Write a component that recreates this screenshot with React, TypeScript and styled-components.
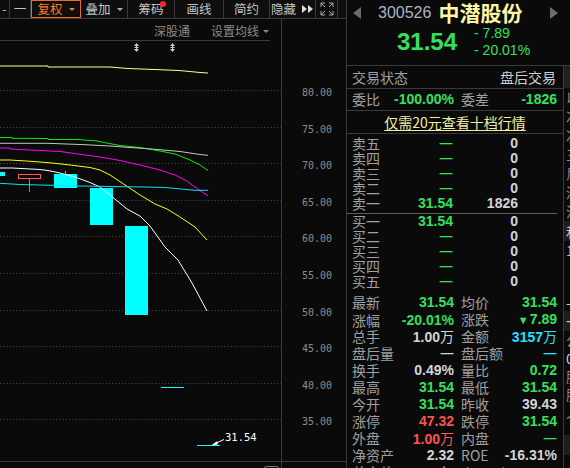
import React from 'react'
import styled, { createGlobalStyle } from 'styled-components'

const GREEN = '#35e05e'
const RED = '#ff5252'
const CYAN = '#22e2ff'
const WHITE = '#d4d4d4'
const LABEL = '#a0a0a0'
const LINE = '#3a3a3a'

const GlobalStyle = createGlobalStyle`
  html, body {
    margin: 0;
    padding: 0;
    background: #0a0a0a;
  }
  body {
    width: 570px;
    height: 468px;
    overflow: hidden;
    font-family: "Noto Sans CJK SC", sans-serif;
  }
`

const Screen = styled.div`
  display: flex;
  width: 570px;
  height: 468px;
  background: #0a0a0a;
  overflow: hidden;
`

/* ---------- left: toolbar + chart ---------- */

const LeftPane = styled.div`
  display: flex;
  flex-direction: column;
  width: 346px;
`
const Toolbar = styled.div`
  display: flex;
  height: 18px;
  border-bottom: 1px solid ${LINE};
  background: #0e0e0e;
`
const ToolButton = styled.div<{ $w: number; $active?: boolean }>`
  position: relative;
  box-sizing: border-box;
  display: flex;
  align-items: center;
  justify-content: center;
  gap: 6px;
  width: ${(p) => p.$w}px;
  height: 18px;
  border-right: 1px solid ${(p) => (p.$active ? '#f06a1e' : LINE)};
  border-left: ${(p) => (p.$active ? '1px solid #f06a1e' : 'none')};
  border-top: ${(p) => (p.$active ? '1px solid #f06a1e' : 'none')};
  border-bottom: ${(p) => (p.$active ? '1px solid #f06a1e' : 'none')};
  color: ${(p) => (p.$active ? '#ff7a2a' : '#c4c4c4')};
  font-size: 12.5px;
  line-height: 16px;
`
const Caret = styled.span<{ $c?: string }>`
  width: 0;
  height: 0;
  border-left: 3px solid transparent;
  border-right: 3px solid transparent;
  border-top: 3px solid ${(p) => p.$c || '#b0b0b0'};
`
const RedDot = styled.span`
  position: absolute;
  left: 32px;
  top: 1px;
  width: 6px;
  height: 6px;
  border-radius: 50%;
  background: #ff2424;
`

const Main = styled.div`
  display: flex;
  height: 442px;
`
const ChartCol = styled.div`
  box-sizing: border-box;
  display: flex;
  flex-direction: column;
  width: 282px;
  border-right: 1px solid ${LINE};
`
const SubHeader = styled.div`
  display: flex;
  justify-content: flex-end;
  align-items: center;
  gap: 21px;
  height: 22px;
  margin-right: 11px;
  padding: 3px 1px 0 0;
  box-sizing: border-box;
  border-bottom: 1px solid ${LINE};
  color: #8a8a8a;
  font-size: 12px;
  line-height: 14px;
`
const SubItem = styled.span`
  display: flex;
  align-items: center;
  gap: 4px;
`
const ChartSvg = styled.svg`
  display: block;
`
const AxisSvg = styled.svg`
  display: block;
`
const XStrip = styled.div`
  display: flex;
  height: 7px;
  border-top: 1px solid ${LINE};
`
const XStripChart = styled.div`
  box-sizing: border-box;
  position: relative;
  width: 282px;
  border-right: 1px solid ${LINE};
`
const ScrollKnob = styled.span`
  position: absolute;
  left: 264px;
  top: 4px;
  width: 13px;
  height: 6px;
  border: 1px solid #777;
  border-radius: 2px;
`

/* ---------- right: quote panel ---------- */

const RightPane = styled.div`
  display: flex;
  flex-direction: column;
  width: 224px;
  border-left: 1px solid ${LINE};
`
const Header = styled.div`
  height: 65px;
  border-bottom: 1px solid ${LINE};
`
const TitleRow = styled.div`
  display: flex;
  align-items: center;
  height: 25px;
  padding-left: 6px;
`
const Arrow = styled.span<{ $dir: 'left' | 'right' }>`
  width: 0;
  height: 0;
  border-top: 6px solid transparent;
  border-bottom: 6px solid transparent;
  ${(p) =>
    p.$dir === 'left'
      ? 'border-right: 8px solid #6c6c6c;'
      : 'border-left: 8px solid #6c6c6c; margin-left: auto; margin-right: 13px;'}
`
const Code = styled.span`
  margin-left: 17px;
  color: #aab2c4;
  font-family: "Liberation Sans", sans-serif;
  font-size: 16px;
  line-height: 18px;
`
const Name = styled.span`
  margin-left: 7px;
  color: #fff6a2;
  font-size: 21px;
  font-weight: 700;
  line-height: 1;
`
const PriceRow = styled.div`
  display: flex;
  align-items: flex-start;
  padding-left: 50px;
`
const BigPrice = styled.span`
  color: ${GREEN};
  font-family: "Liberation Sans", sans-serif;
  font-size: 24px;
  font-weight: 700;
  line-height: 34px;
`
const ChangeCol = styled.div`
  display: flex;
  flex-direction: column;
  margin-left: 17px;
  color: ${GREEN};
  font-family: "Liberation Sans", sans-serif;
  font-size: 14px;
  line-height: 17px;
  white-space: pre;
`

const Body = styled.div`
  display: flex;
  flex: 1;
  min-height: 0;
`
const Panel = styled.div`
  box-sizing: border-box;
  width: 217px;
  border-right: 1px solid ${LINE};
  overflow: hidden;
`
const InfoRow = styled.div<{ $h: number }>`
  display: flex;
  align-items: center;
  justify-content: space-between;
  height: ${(p) => p.$h}px;
  line-height: ${(p) => p.$h}px;
  padding: 0 7px 0 5px;
  border-bottom: 1px solid ${LINE};
`
const Label = styled.span<{ $c?: string }>`
  color: ${(p) => p.$c || LABEL};
  font-size: 14px;
  white-space: nowrap;
`
const Value = styled.span<{ $c: string }>`
  color: ${(p) => p.$c};
  font-family: "Liberation Sans", "Noto Sans CJK SC", sans-serif;
  font-size: 14px;
  font-weight: 700;
  white-space: nowrap;
`
const Unit = styled.span`
  font-family: "Noto Sans CJK SC", sans-serif;
  font-weight: 400;
`
const Tri = styled.span`
  font-size: 11px;
  margin-right: 1px;
`
const PairRow = styled.div<{ $h: number; $line?: boolean }>`
  display: grid;
  grid-template-columns: 102px 96px;
  column-gap: 7px;
  align-items: center;
  height: ${(p) => p.$h}px;
  line-height: ${(p) => p.$h}px;
  padding-left: 5px;
  border-bottom: ${(p) => (p.$line ? `1px solid ${LINE}` : 'none')};
`
const Half = styled.div`
  display: flex;
  justify-content: space-between;
`
const PromoRow = styled.div`
  display: flex;
  align-items: center;
  justify-content: center;
  height: 22px;
  line-height: 22px;
  border-bottom: 1px solid ${LINE};
`
const Promo = styled.span`
  color: #f4eea0;
  font-size: 14px;
  text-decoration: underline;
  text-underline-offset: 2px;
`
const Book = styled.div<{ $top: number; $bottom: number; $line?: boolean }>`
  padding-top: ${(p) => p.$top}px;
  padding-bottom: ${(p) => p.$bottom}px;
  margin-right: 6px;
  border-bottom: ${(p) => (p.$line ? '1px solid #5c5c5c' : 'none')};
`
const BookRow = styled.div`
  display: grid;
  grid-template-columns: 40px 61px 65px;
  height: 15px;
  line-height: 15px;
  padding-left: 5px;
  & > *:not(:first-child) {
    text-align: right;
  }
`
const Stats = styled.div`
  margin-top: 5px;
`

const Strip = styled.div`
  display: flex;
  flex-direction: column;
  flex: 1;
  overflow: hidden;
`
const StripCell = styled.div<{ $h: number; $bg?: string; $c?: string }>`
  height: ${(p) => p.$h}px;
  line-height: ${(p) => p.$h}px;
  padding-left: 2px;
  background: ${(p) => p.$bg || 'transparent'};
  color: ${(p) => p.$c || '#8a8a8a'};
  font-size: 14px;
  white-space: nowrap;
`

/* ---------- data ---------- */

const gridPrices = [80, 75, 70, 65, 60, 55, 50, 45, 40, 35]
const priceY = (p: number) => Math.round(91 + (80 - p) * 7.32) + 0.5

const maLines = [
  {
    color: '#ffff8c',
    pts: '0,67 48,67 48,68 110,68 128,69.5 155,70.5 179,71.5 190,72.5 200,73.5 208,74',
  },
  {
    color: '#00f000',
    pts: '0,138.5 12,138.5 12,139.3 48,139.5 48,140.5 78,140.5 97,142 104,143.5 120,146.5 140,148.5 160,152 175,155 190,161 200,166 208,171.5',
  },
  {
    color: '#c4c4c4',
    pts: '0,144.3 48,144.3 85,145.7 110,147 130,148.5 145,149.5 160,150.7 180,152.5 200,155.5 208,156.3',
  },
  {
    color: '#ff00ff',
    pts: '0,149 10,149 10,150 60,152.5 100,158 120,161.5 140,166 160,171 175,176 185,181 195,188 208,197',
  },
  {
    color: '#ffff00',
    pts: '0,161 10,161 34,162.5 52,164 70,166 90,168.5 100,171 110,176 125,186 140,196 155,205 167,210 180,218 195,228 207,241',
  },
  {
    color: '#ffffff',
    pts: '0,169 12,169 40,170.5 48,171.5 60,174 75,178 90,183.5 100,188 110,196 127,210 140,217 150,227 165,248 178,261 192,284 207,312',
  },
  {
    color: '#10e0f0',
    pts: '0,184.3 20,185.5 80,187 145,188 165,188.5 195,191.3 208,191.3',
  },
]

const sells = [
  ['卖五', '一', '0'],
  ['卖四', '一', '0'],
  ['卖三', '一', '0'],
  ['卖二', '一', '0'],
  ['卖一', '31.54', '1826'],
]
const buys = [
  ['买一', '31.54', '0'],
  ['买二', '一', '0'],
  ['买三', '一', '0'],
  ['买四', '一', '0'],
  ['买五', '一', '0'],
]

type Stat = [string, React.ReactNode, string, string, React.ReactNode, string]
const stats: Stat[] = [
  ['最新', '31.54', GREEN, '均价', '31.54', GREEN],
  ['涨幅', '-20.01%', GREEN, '涨跌', <><Tri>▼</Tri>7.89</>, GREEN],
  ['总手', <>1.00<Unit>万</Unit></>, WHITE, '金额', <>3157<Unit>万</Unit></>, CYAN],
  ['盘后量', <Unit>一</Unit>, WHITE, '盘后额', <Unit>一</Unit>, CYAN],
  ['换手', '0.49%', WHITE, '量比', '0.72', GREEN],
  ['最高', '31.54', GREEN, '最低', '31.54', GREEN],
  ['今开', '31.54', GREEN, '昨收', '39.43', WHITE],
  ['涨停', '47.32', RED, '跌停', '31.54', GREEN],
  ['外盘', <>1.00<Unit>万</Unit></>, RED, '内盘', <Unit>一</Unit>, GREEN],
  ['净资产', '2.32', WHITE, 'ROE', '-16.31%', WHITE],
  ['总市值', <>2.44<Unit>亿</Unit></>, WHITE, '市盈(动)', '-78.25', WHITE],
]

const stripCells: { h: number; bg?: string; c?: string; t: string }[] = [
  { h: 22, bg: '#202020', t: '' },
  { h: 19, t: '以' },
  { h: 19, t: '次' },
  { h: 19, t: '次' },
  { h: 19, t: '三' },
  { h: 19, t: '尼' },
  { h: 19, t: '深' },
  { h: 19, t: '沪' },
  { h: 20, bg: '#1e1e1e', c: '#d0d0d0', t: '和' },
  { h: 18, c: '#c8c8c8', t: '1' },
  { h: 34, t: '' },
  { h: 18, c: '#c8c8c8', t: '-1' },
  { h: 20, bg: '#1e1e1e', c: '#d0d0d0', t: '一' },
  { h: 18, t: '公' },
  { h: 18, c: '#d0d0d0', t: '0' },
  { h: 18, t: '股' },
  { h: 18, t: '股' },
  { h: 18, t: '人' },
  { h: 14, t: '' },
  { h: 20, bg: '#1e1e1e', t: '' },
]

const money = (v: string) => (v === '一' ? <Unit>一</Unit> : v)

/* ---------- drawings ---------- */

const UpDownMark = ({ x }: { x: number }) => (
  <g fill="#cfcfcf" stroke="#cfcfcf" strokeWidth={1}>
    <path d={`M${x} 44 L${x + 2.5} 47 L${x - 2.5} 47 Z`} stroke="none" />
    <line x1={x} y1={47} x2={x} y2={50} />
    <line x1={x - 2} y1={48.5} x2={x + 2} y2={48.5} />
    <path d={`M${x - 2.5} 50 L${x + 2.5} 50 L${x} 53 Z`} stroke="none" />
  </g>
)

const FullscreenIcon = () => (
  <svg width="14" height="14" viewBox="0 0 14 14" fill="none" stroke="#a8a8a8" strokeWidth="1">
    <path d="M1 5V1h4M1 1l4 4" />
    <path d="M9 1h4v4M13 1L9 5" />
    <path d="M1 9v4h4M1 13l4-4" />
    <path d="M13 9v4H9M13 13L9 9" />
  </svg>
)

const DoubleArrow = () => (
  <svg width="12" height="8" viewBox="0 0 12 8" fill="#dcdcdc">
    <path d="M0 0L5 4L0 8Z" />
    <path d="M6 0L11 4L6 8Z" />
  </svg>
)

const Chart = () => (
  <ChartSvg width={281} height={419} viewBox="0 42 281 419">
    {gridPrices.map((p) => (
      <line
        key={p}
        x1={0}
        x2={281}
        y1={priceY(p)}
        y2={priceY(p)}
        stroke="#4e4e4e"
        strokeDasharray="1 2.3"
      />
    ))}
    <UpDownMark x={136.5} />
    <UpDownMark x={172.5} />

    <rect x={0} y={173} width={5} height={4} fill="#00ffff" />
    <rect x={18.5} y={175.5} width={22} height={4} fill="none" stroke="#ff5a5a" />
    <line x1={29.5} y1={180} x2={29.5} y2={193} stroke="#ff5a5a" />
    <line x1={65.5} y1={172} x2={65.5} y2={176} stroke="#00ffff" />
    <rect x={54} y={175} width={23} height={14} fill="#00ffff" />
    <rect x={90} y={189} width={23} height={37} fill="#00ffff" />
    <rect x={125} y={227} width={23} height={89} fill="#00ffff" />
    <rect x={161} y={388} width={23} height={1} fill="#00ffff" />
    <rect x={197} y={446} width={23} height={1} fill="#00ffff" />

    {maLines.map((m) => (
      <polyline key={m.color} points={m.pts} fill="none" stroke={m.color} strokeWidth={1} />
    ))}

    <line x1={214} y1={445} x2={224} y2={440.5} stroke="#ffffff" />
    <path d="M211 446.5L217 442.3L218 445.6Z" fill="#ffffff" />
    <text
      x={225}
      y={442}
      fill="#ffffff"
      fontFamily="'DejaVu Sans Mono', monospace"
      fontSize={10.5}
    >
      31.54
    </text>
  </ChartSvg>
)

const Axis = () => (
  <AxisSvg width={64} height={442} viewBox="282 19 64 442">
    {gridPrices.map((p) => (
      <text
        key={p}
        x={302}
        y={priceY(p) + 4}
        fill="#8c8c8c"
        fontFamily="'DejaVu Sans Mono', monospace"
        fontSize={10}
      >
        {p.toFixed(2)}
      </text>
    ))}
  </AxisSvg>
)

/* ---------- page ---------- */

export default function App() {
  return (
    <>
      <GlobalStyle />
      <Screen>
        <LeftPane>
          <Toolbar>
            <ToolButton $w={10}>-</ToolButton>
            <ToolButton $w={21}>一</ToolButton>
            <ToolButton $w={50} $active>
              复权<Caret $c="#ff7a2a" />
            </ToolButton>
            <ToolButton $w={47}>
              叠加<Caret />
            </ToolButton>
            <ToolButton $w={47}>
              筹码
              <RedDot />
            </ToolButton>
            <ToolButton $w={49}>画线</ToolButton>
            <ToolButton $w={46}>简约</ToolButton>
            <ToolButton $w={46}>
              <span>隐藏</span>
              <DoubleArrow />
            </ToolButton>
            <ToolButton $w={22}>
              <FullscreenIcon />
            </ToolButton>
          </Toolbar>
          <Main>
            <ChartCol>
              <SubHeader>
                <SubItem>深股通</SubItem>
                <SubItem>
                  设置均线<Caret $c="#8a8a8a" />
                </SubItem>
              </SubHeader>
              <Chart />
            </ChartCol>
            <Axis />
          </Main>
          <XStrip>
            <XStripChart>
              <ScrollKnob />
            </XStripChart>
          </XStrip>
        </LeftPane>

        <RightPane>
          <Header>
            <TitleRow>
              <Arrow $dir="left" />
              <Code>300526</Code>
              <Name>中潜股份</Name>
              <Arrow $dir="right" />
            </TitleRow>
            <PriceRow>
              <BigPrice>31.54</BigPrice>
              <ChangeCol>
                <span>- 7.89</span>
                <span>- 20.01%</span>
              </ChangeCol>
            </PriceRow>
          </Header>
          <Body>
            <Panel>
              <InfoRow $h={22}>
                <Label>交易状态</Label>
                <Label $c="#d0d0d0">盘后交易</Label>
              </InfoRow>
              <PairRow $h={21} $line>
                <Half>
                  <Label>委比</Label>
                  <Value $c={GREEN}>-100.00%</Value>
                </Half>
                <Half>
                  <Label>委差</Label>
                  <Value $c={GREEN}>-1826</Value>
                </Half>
              </PairRow>
              <PromoRow>
                <Promo>仅需20元查看十档行情</Promo>
              </PromoRow>
              <Book $top={2} $bottom={2} $line>
                {sells.map(([l, p, v]) => (
                  <BookRow key={l}>
                    <Label>{l}</Label>
                    <Value $c={GREEN}>{money(p)}</Value>
                    <Value $c={WHITE}>{v}</Value>
                  </BookRow>
                ))}
              </Book>
              <Book $top={0} $bottom={0}>
                {buys.map(([l, p, v]) => (
                  <BookRow key={l}>
                    <Label>{l}</Label>
                    <Value $c={GREEN}>{money(p)}</Value>
                    <Value $c={WHITE}>{v}</Value>
                  </BookRow>
                ))}
              </Book>
              <Stats>
                {stats.map(([l1, v1, c1, l2, v2, c2]) => (
                  <PairRow key={l1} $h={17}>
                    <Half>
                      <Label>{l1}</Label>
                      <Value $c={c1}>{v1}</Value>
                    </Half>
                    <Half>
                      <Label>{l2}</Label>
                      <Value $c={c2}>{v2}</Value>
                    </Half>
                  </PairRow>
                ))}
              </Stats>
            </Panel>
            <Strip>
              {stripCells.map((s, i) => (
                <StripCell key={i} $h={s.h} $bg={s.bg} $c={s.c}>
                  {s.t}
                </StripCell>
              ))}
            </Strip>
          </Body>
        </RightPane>
      </Screen>
    </>
  )
}
